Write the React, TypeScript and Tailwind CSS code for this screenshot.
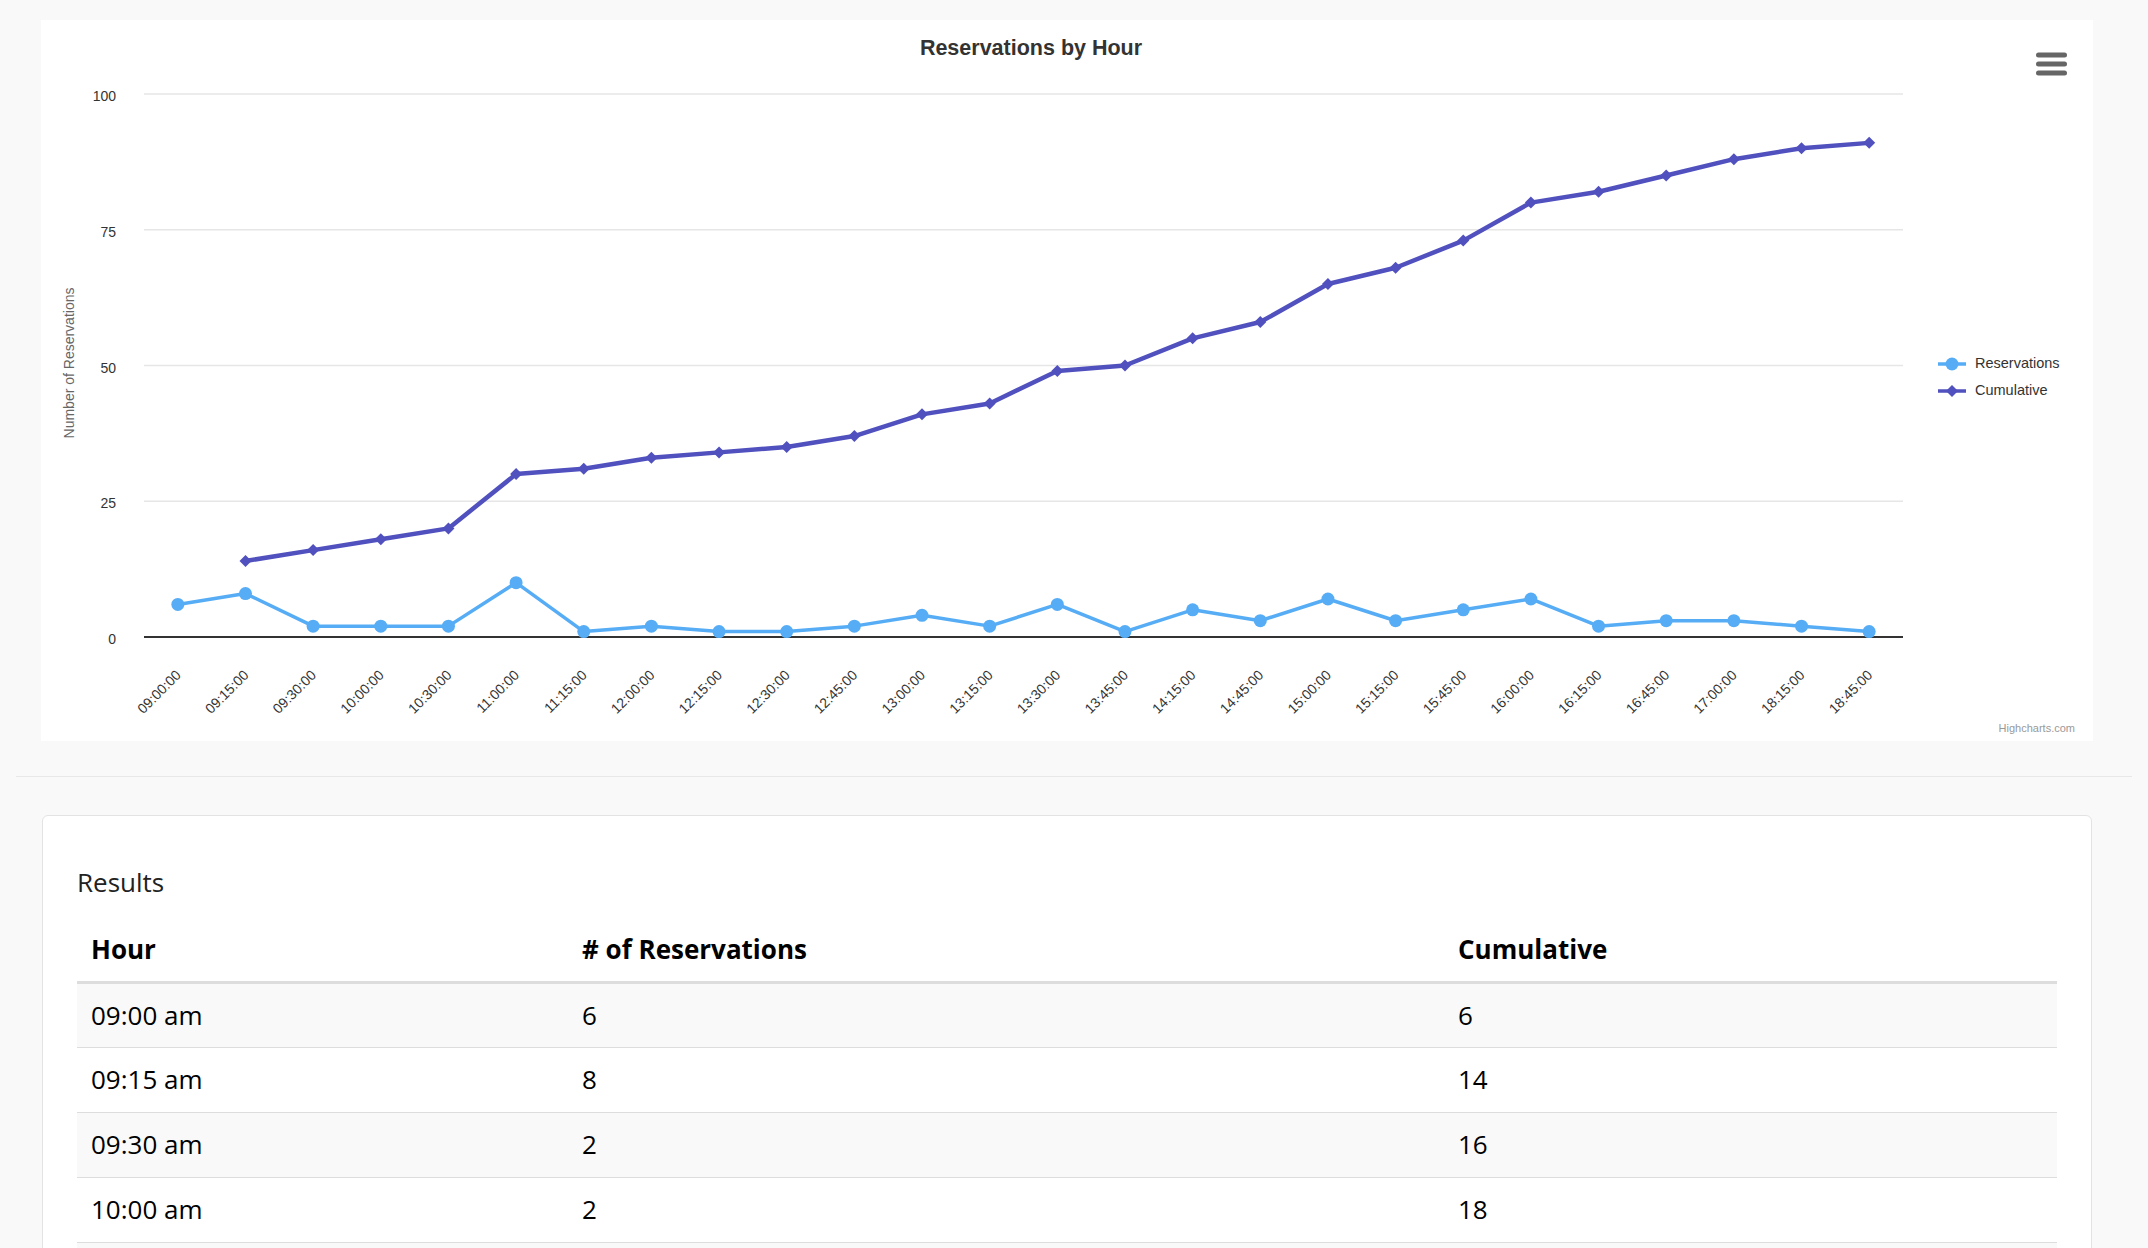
import React from "react";

const hours = ["09:00:00","09:15:00","09:30:00","10:00:00","10:30:00","11:00:00","11:15:00","12:00:00","12:15:00","12:30:00","12:45:00","13:00:00","13:15:00","13:30:00","13:45:00","14:15:00","14:45:00","15:00:00","15:15:00","15:45:00","16:00:00","16:15:00","16:45:00","17:00:00","18:15:00","18:45:00"];
const res = [6,8,2,2,2,10,1,2,1,1,2,4,2,6,1,5,3,7,3,5,7,2,3,3,2,1];
const cum: (number | null)[] = [null,14,16,18,20,30,31,33,34,35,37,41,43,49,50,55,58,65,68,73,80,82,85,88,90,91];

const L = 144, R = 1903, Y0 = 637, K = 5.43;
const cw = (R - L) / 26;
const px = (i: number) => L + cw * (i + 0.5);
const py = (v: number) => Y0 - v * K;
const BLUE = "#56adf5";
const PURPLE = "#5050bf";

function Diamond({ x, y, s = 6 }: { x: number; y: number; s?: number }) {
  return <path d={`M${x} ${y - s} L${x + s} ${y} L${x} ${y + s} L${x - s} ${y} Z`} fill={PURPLE} />;
}

function Chart() {
  const resPts = res.map((v, i) => `${px(i)},${py(v)}`).join(" ");
  const cumPts = cum.map((v, i) => (v == null ? null : `${px(i)},${py(v)}`)).filter(Boolean).join(" ");
  return (
    <svg viewBox="41 20 2052 721" width="2052" height="721" className="block" style={{ fontFamily: '"Liberation Sans", Arial, sans-serif' }}>
      <rect x="41" y="20" width="2052" height="721" fill="#fff" />
      <text x="1031" y="55" textAnchor="middle" fontSize="21.5" fontWeight="bold" fill="#333">Reservations by Hour</text>
      {[100, 75, 50, 25].map((v) => (
        <line key={v} x1={L} x2={R} y1={py(v)} y2={py(v)} stroke="#e6e6e6" strokeWidth="1.5" />
      ))}
      <line x1={L} x2={R} y1={Y0} y2={Y0} stroke="#333" strokeWidth="2" />
      {[0, 25, 50, 75, 100].map((v) => (
        <text key={v} x="116" y={py(v) + 7} textAnchor="end" fontSize="14" fill="#333">{v}</text>
      ))}
      <text x="0" y="0" transform="translate(74,363) rotate(-90)" textAnchor="middle" fontSize="14" fill="#666">Number of Reservations</text>
      {hours.map((h, i) => (
        <text key={h} x={px(i) + 4} y={676} transform={`rotate(-45 ${px(i) + 4} 676)`} textAnchor="end" fontSize="14" fill="#333">{h}</text>
      ))}
      <polyline points={resPts} fill="none" stroke={BLUE} strokeWidth="3.5" strokeLinejoin="round" />
      {res.map((v, i) => <circle key={i} cx={px(i)} cy={py(v)} r="6.5" fill={BLUE} />)}
      <polyline points={cumPts} fill="none" stroke={PURPLE} strokeWidth="4.5" strokeLinejoin="round" />
      {cum.map((v, i) => (v == null ? null : <Diamond key={i} x={px(i)} y={py(v)} />))}
      <line x1="1938" x2="1966" y1="364" y2="364" stroke={BLUE} strokeWidth="3.5" />
      <circle cx="1952" cy="364" r="6.5" fill={BLUE} />
      <text x="1975" y="368" fontSize="14.5" fill="#333">Reservations</text>
      <line x1="1938" x2="1966" y1="391" y2="391" stroke={PURPLE} strokeWidth="3.5" />
      <Diamond x={1952} y={391} />
      <text x="1975" y="395" fontSize="14.5" fill="#333">Cumulative</text>
      {[55, 64, 73].map((y) => (
        <rect key={y} x="2036" y={y - 2.5} width="31" height="5" rx="2.5" fill="#666" />
      ))}
      <text x="2075" y="732" textAnchor="end" fontSize="11" fill="#999">Highcharts.com</text>
    </svg>
  );
}

const rows = [
  ["09:00 am", "6", "6"],
  ["09:15 am", "8", "14"],
  ["09:30 am", "2", "16"],
  ["10:00 am", "2", "18"],
  ["10:30 am", "2", "20"],
];

export default function App() {
  return (
    <div className="w-[2148px] h-[1248px] overflow-hidden bg-[#f9f9f9]" style={{ fontFamily: '"Open Sans", "Liberation Sans", sans-serif' }}>
      <div className="pt-[20px] pl-[41px]">
        <Chart />
      </div>
      <div className="mx-[16px] mt-[35px] border-t border-[#e8e8e8]" />
      <div className="ml-[42px] mt-[38px] w-[2050px] h-[600px] bg-white border border-[#e3e3e3] rounded-[6px] px-[34px] pt-[48px]">
        <div className="text-[26px] text-[#222] leading-[36px]">Results</div>
        <table className="mt-[18px] w-full text-[26px] text-black border-collapse">
          <thead>
            <tr className="border-b-[3px] border-[#dddddd]">
              <th className="text-left font-bold h-[64px] pl-[14px] w-[505px]">Hour</th>
              <th className="text-left font-bold w-[876px]"># of Reservations</th>
              <th className="text-left font-bold">Cumulative</th>
            </tr>
          </thead>
          <tbody>
            {rows.map((r, i) => (
              <tr key={i} className={`border-b border-[#dddddd] ${i % 2 === 0 ? "bg-[#f9f9f9]" : "bg-white"}`}>
                <td className="h-[65px] pl-[14px]">{r[0]}</td>
                <td>{r[1]}</td>
                <td>{r[2]}</td>
              </tr>
            ))}
          </tbody>
        </table>
      </div>
    </div>
  );
}
